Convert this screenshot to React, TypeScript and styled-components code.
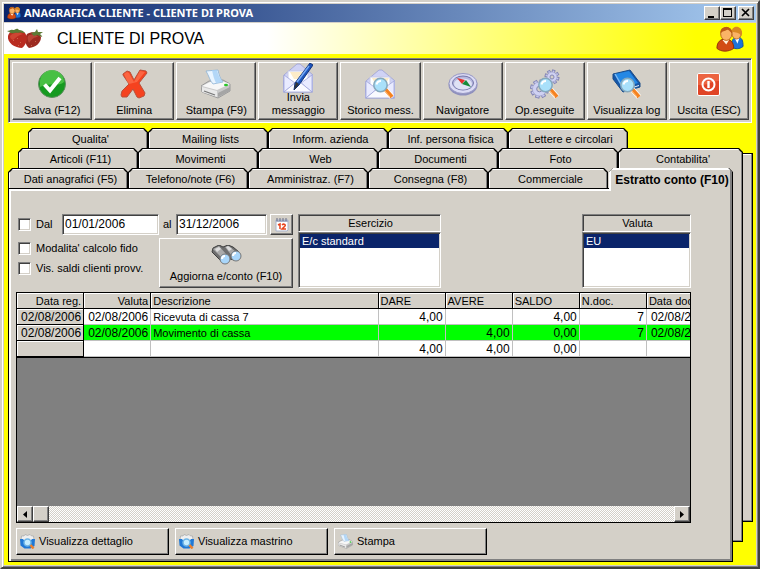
import React from 'react';
import styled, { createGlobalStyle, css } from 'styled-components';

const face = '#d4d0c8';
const shadow = '#808080';
const dark = '#404040';
const navy = '#0a246a';

const Global = createGlobalStyle`
  *, *::before, *::after { box-sizing: border-box; }
  body { margin: 0; background: ${face}; }
  body, button, input, select {
    font-family: "Liberation Sans", Arial, sans-serif;
    font-size: 11px;
    line-height: 13px;
    color: #000;
  }
  button, input, select { margin: 0; border-radius: 0; }
`;

const raised = css`
  border: 1px solid;
  border-color: #fff ${dark} ${dark} #fff;
  box-shadow: inset -1px -1px ${shadow};
`;

const sunken = css`
  border: 1px solid;
  border-color: ${shadow} #fff #fff ${shadow};
  box-shadow: inset 1px 1px ${dark}, inset -1px -1px ${face};
`;

const Frame = styled.main`
  min-height: 100vh;
  display: flex;
  flex-direction: column;
  padding: 2px;
  background: ${face};
  border: 2px solid;
  border-color: ${face} ${dark} ${dark} ${face};
  box-shadow: inset 1px 1px #fff, inset -1px -1px ${shadow};
`;

const TitleBar = styled.header`
  display: flex;
  align-items: center;
  height: 18px;
  margin-bottom: 1px;
  padding: 0 2px 0 3px;
  gap: 3px;
  background: linear-gradient(90deg, ${navy}, #a6caf0);
`;

const Title = styled.h1`
  flex: 1;
  margin: 0;
  font: bold 11px/16px "Noto Sans", "Open Sans", sans-serif;
  color: #fff;
  white-space: nowrap;
`;

const WindowButtons = styled.div`
  display: flex;
`;

const WindowButton = styled.button<{ $apart?: boolean }>`
  ${raised}
  display: flex;
  width: 16px;
  height: 14px;
  padding: 1px 2px;
  margin-left: ${p => (p.$apart ? 2 : 0)}px;
  background: ${face};
`;

const Banner = styled.div`
  display: flex;
  align-items: center;
  height: 31px;
  padding: 0 12px 0 3px;
  background: linear-gradient(90deg, #fff 35%, #ff0 92%);
`;

const BannerName = styled.h2`
  flex: 1;
  margin: 0 0 0 12px;
  font-size: 16px;
  line-height: 20px;
  font-weight: normal;
`;

const Body = styled.div`
  flex: 1;
  display: flex;
  flex-direction: column;
  gap: 5px;
  padding: 4px 3px 3px 4px;
  background: #ff0;
`;

const Toolbar = styled.nav`
  ${sunken}
  display: grid;
  grid-template-columns: repeat(9, minmax(0, 1fr));
  gap: 2px;
  height: 65px;
  margin-right: 1px;
  padding: 3px 2px 2px 3px;
  background: ${face};
`;

const ToolButton = styled.button<{ $tight?: boolean }>`
  ${raised}
  display: flex;
  flex-direction: column;
  align-items: center;
  justify-content: flex-end;
  gap: ${p => (p.$tight ? 0 : 5)}px;
  padding: 0 ${p => (p.$tight ? 10 : 1)}px 2px;
  background: ${face};

  svg { flex: none; margin-bottom: ${p => (p.$tight ? -2 : 0)}px; }
`;

const Notebook = styled.div`
  flex: 1;
  display: grid;
  grid-template: minmax(0, 1fr) / minmax(0, 1fr);
  > * { grid-area: 1 / 1; }
`;

const sheet = css`
  background: ${face};
  border: 1px solid #000;
`;

const BackSheet = styled.div<{ $level: 1 | 2 }>`
  ${sheet}
  margin: ${p => (p.$level === 2 ? '25px 0 40px 20px' : '30px 10px 20px 20px')};
  box-shadow: inset -1px -1px ${shadow}, inset 0 1px #fff;
`;

const Front = styled.div`
  display: flex;
  flex-direction: column;
`;

const TabRow = styled.div<{ $level: 0 | 1 | 2 }>`
  display: grid;
  grid-template-columns: repeat(5, minmax(0, 120fr)) minmax(0, 125fr);
  height: 20px;
  margin-left: ${p => p.$level * 10}px;
  margin-right: ${p => 20 - p.$level * 10}px;
`;

const chamfer = css`
  clip-path: polygon(0 4px, 4px 0, calc(100% - 4px) 0, 100% 4px, 100% 100%, 0 100%);
`;

const TabButton = styled.button<{ $active?: boolean; $front?: boolean }>`
  ${chamfer}
  z-index: ${p => (p.$active ? 1 : 'auto')};
  height: ${p => (p.$active ? 23 : p.$front ? 20 : 24)}px;
  margin-left: ${p => (p.$active ? 1 : 0)}px;
  padding: ${p => (p.$active ? '0 1px 0 0' : '1px 1px 0 1px')};
  border: 0;
  background: #000;
  font-size: ${p => (p.$active ? 12 : 11)}px;
  font-weight: ${p => (p.$active ? 'bold' : 'normal')};
  white-space: nowrap;
`;

const TabFace = styled.span<{ $active?: boolean }>`
  ${chamfer}
  display: block;
  height: 100%;
  padding: ${p => (p.$active ? 4 : 3)}px 0 0 ${p => (p.$active ? 3 : 5)}px;
  background: ${face};
  border: solid;
  border-width: ${p => (p.$active ? '2px 2px 0 2px' : '1px 1px 0 1px')};
  border-color: #fff ${shadow} #fff #fff;
`;

const Panel = styled.section`
  ${sheet}
  flex: 1;
  display: flex;
  flex-direction: column;
  margin-right: 20px;
  padding: 25px 41px 6px 7px;
  box-shadow: inset 2px 2px #fff, inset -2px -2px ${shadow};
`;

const Filters = styled.div`
  display: flex;
  gap: 5px;
  height: 74px;
  margin-bottom: 4px;
`;

const FilterForm = styled.form`
  display: flex;
  flex-direction: column;
  gap: 3px;
  width: 277px;
`;

const DateRow = styled.div`
  display: flex;
  align-items: center;
  height: 21px;
`;

const Check = styled.label`
  display: flex;
  align-items: center;
  gap: 5px;
  height: 20px;
  padding-left: 2px;
  white-space: nowrap;
`;

const CheckBox = styled.input`
  ${sunken}
  appearance: none;
  width: 13px;
  height: 13px;
  background: #fff;
`;

const FromCheck = styled(Check)`
  width: 46px;
`;

const ToLabel = styled.label`
  width: 17px;
  padding-left: 4px;
`;

const DateInput = styled.input<{ $wide?: boolean }>`
  ${sunken}
  width: ${p => (p.$wide ? 97 : 91)}px;
  height: 21px;
  padding: 0 1px 1px 2px;
  font-size: 12px;
  background: #fff;
`;

const CalendarButton = styled.button`
  ${raised}
  display: flex;
  align-items: center;
  justify-content: center;
  width: 23px;
  height: 21px;
  margin-left: auto;
  padding: 0;
  background: ${face};
`;

const OptionsRow = styled.div`
  display: flex;
  justify-content: space-between;
`;

const RefreshButton = styled.button`
  ${raised}
  display: flex;
  flex-direction: column;
  align-items: center;
  justify-content: space-between;
  width: 134px;
  height: 50px;
  padding: 6px 0 4px;
  background: ${face};
`;

const Picker = styled.div<{ $end?: boolean }>`
  display: flex;
  flex-direction: column;
  width: ${p => (p.$end ? 109 : 143)}px;
  margin-left: ${p => (p.$end ? 'auto' : 0)};
`;

const PickerLabel = styled.label`
  border: 1px solid;
  border-color: ${shadow} #fff #fff ${shadow};
  box-shadow: inset 1px 1px ${dark};
  height: 18px;
  padding: 2px 0 0 2px;
  text-align: center;
`;

const PickerList = styled.select`
  ${sunken}
  appearance: none;
  flex: 1;
  min-height: 0;
  padding: 1px;
  overflow: hidden;
  background: #fff;
  outline: 0;

  option {
    min-height: 14px;
    padding: 1px 2px 0;
    line-height: 13px;
  }
  option:checked {
    background: linear-gradient(${navy}, ${navy});
    -webkit-text-fill-color: #fff;
  }
`;

const Ledger = styled.div`
  flex: 1;
  display: flex;
  flex-direction: column;
  min-height: 0;
  border: 1px solid #000;
  background: ${shadow};
  overflow: hidden;
`;

const LedgerView = styled.div`
  flex: 1;
  overflow: hidden;
`;

const Table = styled.table`
  table-layout: fixed;
  width: 697px;
  border-collapse: separate;
  border-spacing: 0;
  border-bottom: 1px solid #000;
`;

const Column = styled.col<{ $wide?: boolean }>`
  width: ${p => (p.$wide ? 227 : 67)}px;
`;

const HeadCell = styled.th<{ $right?: boolean }>`
  height: 16px;
  padding: 2px 2px 0;
  border-right: 1px solid #000;
  border-bottom: 1px solid #000;
  box-shadow: inset 1px 1px #fff;
  background: ${face};
  font-weight: normal;
  line-height: 13px;
  text-align: ${p => (p.$right ? 'right' : 'left')};
  white-space: nowrap;
  overflow: hidden;
`;

const Row = styled.tr<{ $green?: boolean }>`
  background: ${p => (p.$green ? '#0f0' : '#fff')};
`;

const Cell = styled.td<{ $figure?: boolean; $fixed?: boolean }>`
  height: 16px;
  padding: 2px 2px 0 2px;
  border-right: 1px solid ${p => (p.$fixed ? '#000' : '#c0c0c0')};
  border-bottom: 1px solid ${p => (p.$fixed ? '#000' : '#c0c0c0')};
  background: ${p => (p.$fixed ? face : 'transparent')};
  box-shadow: ${p => (p.$fixed ? 'inset 1px 1px #fff' : 'none')};
  font-size: ${p => (p.$figure ? 12 : 11)}px;
  line-height: 13px;
  text-align: ${p => (p.$figure ? 'right' : 'left')};
  white-space: nowrap;
  overflow: hidden;
`;

const ScrollBar = styled.div`
  display: flex;
  height: 16px;
  background: repeating-conic-gradient(#fff 0 25%, ${face} 0 50%) 0 0 / 2px 2px;
`;

const ScrollButton = styled.button<{ $end?: boolean }>`
  ${raised}
  display: flex;
  align-items: center;
  justify-content: center;
  width: 16px;
  padding: 0;
  margin-left: ${p => (p.$end ? 'auto' : 0)};
  background: ${face};
`;

const Actions = styled.div`
  display: flex;
  gap: 6px;
  margin-top: 5px;
`;

const ActionButton = styled.button`
  display: flex;
  align-items: center;
  gap: 4px;
  width: 153px;
  height: 27px;
  padding: 0 3px;
  border: 1px solid;
  border-color: #fff #000 #000 #fff;
  box-shadow: inset -1px -1px ${shadow};
  background: ${face};
`;

const Lens = () => (
  <g>
    <path d="M20 20l7 8" stroke="#fff" strokeWidth="5.500" />
    <path d="M20 20l7 8" stroke="#f58220" strokeWidth="4" />
    <path d="M19 21l6 7" stroke="#ffc78a" strokeWidth="1" />
    <circle cx="15.500" cy="16" r="6.700" fill="#a9e0fa" stroke="#86a9bd" strokeWidth="1.500" />
    <path d="M11.500 15.500a4.500 4.500 0 014.500-3.500" stroke="#fff" strokeWidth="2" fill="none" />
  </g>
);

const Svg = ({ size = 30, children }: { size?: number; children: React.ReactNode }) => (
  <svg width={size} height={size} viewBox="0 0 30 30" fill="none" aria-hidden="true">{children}</svg>
);

const SaveIcon = () => (
  <Svg>
    <circle cx="15" cy="15" r="13.500" fill="#169a20" stroke="#5c8f5e" />
    <path d="M3 13a12 12 0 0124 0c-5 5-14 0-24 5z" fill="#55c94e" opacity=".8" />
    <path d="M7.500 15.500l5.500 6 10-12.500" stroke="#fff" strokeWidth="4" />
  </Svg>
);

const DeleteIcon = () => (
  <Svg>
    <path d="M4 5l4-3 3 1 4 8 6-10 6 1 1 2-8 10 6 10-1 3-5 2-2-1-4-8-6 8-5 0-1-2 1-4 7-7-6-9z" fill="#f5421f" stroke="#b8503a" />
    <path d="M5 5l3-2 2 1 5 9 6-11 5 1-8 10-8 2-2-3z" fill="#ff7d5a" opacity=".6" />
  </Svg>
);

const PrintArt = () => (
  <g>
    <path d="M0 17l8-5 14-1 7 4v7l-12 7L1 23z" fill="#c9c9c9" stroke="#9a9a9a" />
    <path d="M1 17l8-4 12-1 8 3-13 6z" fill="#f7f7f7" />
    <path d="M5 2l12-1c1 5 2 8 5 12l-10 2c-3-3-4-8-7-13z" fill="#eaf5ff" stroke="#8db2d5" strokeWidth=".8" />
    <path d="M16 1c1 5 3 9 6 12l-7 1c-2-4-3-8-4-13z" fill="#a5cff5" opacity=".8" />
    <path d="M1 18l15 4v6L1 23z" fill="#e9e9e9" />
    <path d="M3 22l11 4" stroke="#777" strokeWidth="1.300" />
    <path d="M17 24l12-6v4l-12 6z" fill="#a5a5a5" />
    <ellipse cx="25" cy="16" rx="2" ry="1.300" fill="#28c528" />
  </g>
);

const Envelope = () => (
  <g>
    <path d="M1 12L14 1h3l13 11v17H0z" fill="#cfd2f5" stroke="#9aa0d4" strokeWidth=".8" />
    <path d="M5 8h20v13H5z" fill="#fff" stroke="#c9cbe6" />
    <path d="M7 9h17l-4 7h-9z" fill="#fdecc8" />
    <path d="M1 12l11 8L1 29zM29 12l-11 8 11 9z" fill="#e9ebff" stroke="#9fa5da" strokeWidth=".8" />
    <path d="M1 29l12-10h4l12 10z" fill="#fafaff" stroke="#9fa5da" strokeWidth=".8" />
  </g>
);

const MessageIcon = () => (
  <Svg>
    <Envelope />
    <path d="M27 0l3 2-14 20-5 5 1-7z" fill="#1d55bd" stroke="#13337a" />
    <path d="M26 3L14 19" stroke="#77a9f5" strokeWidth="1.500" />
    <path d="M13 19l3 2-5 6z" fill="#333" />
  </Svg>
);

const HistoryIcon = () => (
  <Svg><Envelope /><Lens /></Svg>
);

const CompassIcon = () => (
  <Svg>
    <ellipse cx="15" cy="16" rx="14.500" ry="10.500" fill="#8f90bd" />
    <ellipse cx="15" cy="14.500" rx="14" ry="10" fill="#dcdcf5" stroke="#9697c4" />
    <ellipse cx="15" cy="14" rx="10.500" ry="7" fill="#b5b7de" stroke="#7476a9" />
    <ellipse cx="15" cy="15" rx="9" ry="5.500" fill="#dfe2f5" />
    <path d="M9 9l8 2-3 4z" fill="#e5322d" />
    <path d="M14 15l4-4 5 7z" fill="#168a3a" />
  </Svg>
);

const Gear = ({ x, y, r }: { x: number; y: number; r: number }) => {
  const teeth = [0, 45, 90, 135].map(a => (
    <rect
      key={a}
      x={x - r / 4}
      y={y - r - 2}
      width={r / 2}
      height={2 * r + 4}
      transform={`rotate(${a + 15} ${x} ${y})`}
    />
  ));
  return (
    <g>
      <g fill="#c9cbee" stroke="#8587b5" strokeWidth="1">{teeth}</g>
      <circle cx={x} cy={y} r={r} fill="#cfd1f2" stroke="#9a9cca" strokeWidth=".6" />
      <circle cx={x} cy={y} r={r / 2.5} fill={face} stroke="#8587b5" />
    </g>
  );
};

const OperationsIcon = () => (
  <Svg><Gear x={22} y={8} r={5} /><Gear x={9.5} y={20} r={7} /><Lens /></Svg>
);

const LogIcon = () => (
  <Svg>
    <path d="M1 5l17-4 10 13v4L11 23 1 10z" fill="#1556a8" stroke="#174b88" />
    <path d="M3 5l14-3 9 12-15 5z" fill="#2488e5" />
    <path d="M11 21l16-5v1l-16 5z" fill="#e9f1fa" />
    <path d="M3 5l8 14" stroke="#7bbcf7" strokeWidth="1.500" />
    <Lens />
  </Svg>
);

const ExitIcon = () => (
  <Svg>
    <rect x="3.500" y="4.500" width="22" height="22" rx="1.500" fill="#e04425" stroke="#fff" />
    <path d="M4 5h21v7c-8 0-11 5-21 4z" fill="#f37a55" opacity=".6" />
    <circle cx="14.500" cy="15.500" r="6" stroke="#fff" strokeWidth="2" />
    <path d="M14.500 12v7" stroke="#fff" strokeWidth="2.400" />
  </Svg>
);

const PeopleIcon = ({ size = 28 }: { size?: number }) => (
  <Svg size={size}>
    <path d="M17 24c-1-8 2-11 6-11 5 0 6 4 6 10-4 3-8 3-12 1z" fill="#1d74d8" stroke="#0f4f9f" />
    <path d="M20 14l3 6 2-6z" fill="#fff" />
    <ellipse cx="22" cy="9" rx="5" ry="6" fill="#f9b266" stroke="#b8691e" />
    <path d="M17 7c0-7 11-7 11 2l-1 3c-2-5-6-3-10-5z" fill="#d98822" />
    <path d="M1 25c0-7 4-10 9-10s9 3 9 10c-5 4-14 4-18 0z" fill="#d24c14" stroke="#8d2d0a" />
    <path d="M7 16l4 5 3-5z" fill="#fff3df" />
    <ellipse cx="11" cy="9.500" rx="6" ry="7" fill="#fbb466" stroke="#b8651b" />
    <path d="M5 9C3 0 19 0 17 9c-2-2-3-4-5-4-3 2-5 1-7 4z" fill="#bb5a15" />
  </Svg>
);

const StrawberryIcon = () => (
  <svg width="38" height="22" viewBox="0 0 38 22" aria-hidden="true">
    <path d="M20 6c5-3 12-2 14 3 0 6-5 10-12 11-4-3-5-9-2-14z" fill="#9c2a20" />
    <path d="M1 8c1-6 12-7 17-3 4 5 1 12-3 15C8 20 0 15 1 8z" fill="#b92c20" />
    <path d="M3 8c3-4 9-4 13-2-4 1-7 3-10 6-2-1-3-2-3-4z" fill="#d9503a" opacity=".7" />
    <path d="M21 8c3-2 8-2 10 1-4 0-6 2-9 6-1-2-2-5-1-7z" fill="#c8503e" opacity=".7" />
    <path d="M0 3c3 0 3-2 6-1 2 0 4-3 6 0 3 0 4 1 6 3-3 0-5-1-7 0-3-1-5 1-7 0zM24 5l4-1 2-3 1 3 5 0-3 2 3 3-6-2-3 1z" fill="#5d7a35" />
    <path d="M6 12l1 1m3-3l1 1m2 3l1 1m-3 2l1 1m16-5l1 1m-5 3l1 1" stroke="#d98060" strokeWidth=".7" />
  </svg>
);

const BinocularIcon = () => (
  <svg width="31" height="20" viewBox="0 0 31 20" aria-hidden="true">
    <path d="M2 3l6-3 4 2 5-2 5 2 6 5-5 8-8-2-5 3L1 7z" fill="#6e6e6e" stroke="#3f3f3f" />
    <path d="M2 4l6-3 7 8-4 4zM14 2l4-1 7 6-4 4z" fill="#aaa" />
    <path d="M4 4l4-2 2 2-4 3zM15 2l2-1 4 3-3 2z" fill="#ddd" />
    <ellipse cx="14" cy="14" rx="5" ry="5" fill="#a9d6fa" stroke="#777" />
    <ellipse cx="25" cy="11" rx="5" ry="5" fill="#a9d6fa" stroke="#777" />
    <path d="M11 14c0-2 1-3 3-3M22 11c0-2 1-3 3-3" stroke="#fff" strokeWidth="2" fill="none" />
  </svg>
);

const CalendarIcon = () => (
  <svg width="14" height="14" viewBox="0 0 14 14" aria-hidden="true">
    <path d="M1 2h12v10l-1 1H1z" fill="#fff" stroke="#a9b4cc" />
    <path d="M1 2h12v2H1z" fill="#aab2c8" />
    <path d="M2 0v3m3-3v3m3-3v3m3-3v3" stroke="#6a6f86" />
    <path d="M3 7l2-1v5m2-4c2-2 4 0 3 1l-3 3h4" stroke="#e8431c" strokeWidth="1.500" fill="none" />
  </svg>
);

const ViewIcon = () => (
  <Svg size={15}>
    <path d="M3 4h5l2-3 5 2 5-2 3 3h4l1 10H2z" fill="#efefef" stroke="#8d9296" />
    <path d="M0 10h6l3 4h12l3-4h6l-1 14-8 5H9l-8-6z" fill="#1e78d6" />
    <circle cx="15" cy="17" r="7" fill="#c4edff" stroke="#6cb4e6" strokeWidth="3" />
    <path d="M21 22l6 7" stroke="#ef812c" strokeWidth="5" />
  </Svg>
);

const Arrow = ({ right }: { right?: boolean }) => (
  <svg width="4" height="7" viewBox="0 0 4 7" aria-hidden="true">
    <path d={right ? 'M0 0l4 3.500L0 7z' : 'M4 0L0 3.500 4 7z'} />
  </svg>
);

const tools = [
  { label: 'Salva (F12)', icon: <SaveIcon /> },
  { label: 'Elimina', icon: <DeleteIcon /> },
  { label: 'Stampa (F9)', icon: <Svg><PrintArt /></Svg> },
  { label: 'Invia messaggio', icon: <MessageIcon />, tight: true },
  { label: 'Storico mess.', icon: <HistoryIcon /> },
  { label: 'Navigatore', icon: <CompassIcon /> },
  { label: 'Op.eseguite', icon: <OperationsIcon /> },
  { label: 'Visualizza log', icon: <LogIcon /> },
  { label: 'Uscita (ESC)', icon: <ExitIcon /> },
];

const tabRows: { level: 0 | 1 | 2; tabs: string[] }[] = [
  { level: 2, tabs: ["Qualita'", 'Mailing lists', 'Inform. azienda', 'Inf. persona fisica', 'Lettere e circolari'] },
  { level: 1, tabs: ['Articoli (F11)', 'Movimenti', 'Web', 'Documenti', 'Foto', "Contabilita'"] },
  { level: 0, tabs: ['Dati anagrafici (F5)', 'Telefono/note (F6)', 'Amministraz. (F7)', 'Consegna (F8)', 'Commerciale', 'Estratto conto (F10)'] },
];

const activeTab = 'Estratto conto (F10)';

const columns = ['Data reg.', 'Valuta', 'Descrizione', 'DARE', 'AVERE', 'SALDO', 'N.doc.', 'Data doc.'];

const entries = [
  ['02/08/2006', '02/08/2006', 'Ricevuta di cassa 7', '4,00', '', '4,00', '7', '02/08/2006'],
  ['02/08/2006', '02/08/2006', 'Movimento di cassa', '', '4,00', '0,00', '7', '02/08/2006'],
  ['', '', '', '4,00', '4,00', '0,00', '', ''],
];

export default function App() {
  return (
    <>
      <Global />
      <Frame>
        <TitleBar>
          <PeopleIcon size={14} />
          <Title>ANAGRAFICA CLIENTE - CLIENTE DI PROVA</Title>
          <WindowButtons>
            <WindowButton aria-label="Riduci a icona">
              <svg width="10" height="10"><path d="M1 8h6v2H1z" /></svg>
            </WindowButton>
            <WindowButton aria-label="Ingrandisci">
              <svg width="10" height="10" shapeRendering="crispEdges"><path d="M0 0h9v9H0zM1 2v6h7V2z" fillRule="evenodd" /></svg>
            </WindowButton>
            <WindowButton aria-label="Chiudi" $apart>
              <svg width="10" height="10"><path d="M1 1l7 7M8 1L1 8" stroke="#000" strokeWidth="1.700" /></svg>
            </WindowButton>
          </WindowButtons>
        </TitleBar>
        <Banner>
          <StrawberryIcon />
          <BannerName>CLIENTE DI PROVA</BannerName>
          <PeopleIcon />
        </Banner>
        <Body>
          <Toolbar aria-label="Comandi">
            {tools.map(t => (
              <ToolButton key={t.label} $tight={t.tight}>
                {t.icon}
                <span>{t.label}</span>
              </ToolButton>
            ))}
          </Toolbar>
          <Notebook>
            <BackSheet $level={2} />
            <BackSheet $level={1} />
            <Front>
              {tabRows.map(row => (
                <TabRow key={row.level} $level={row.level} role="tablist">
                  {row.tabs.map(name => (
                    <TabButton
                      key={name}
                      role="tab"
                      aria-selected={name === activeTab}
                      $active={name === activeTab}
                      $front={row.level === 0}
                    >
                      <TabFace $active={name === activeTab}>{name}</TabFace>
                    </TabButton>
                  ))}
                </TabRow>
              ))}
              <Panel role="tabpanel" aria-label={activeTab}>
                <Filters>
                  <FilterForm onSubmit={e => e.preventDefault()}>
                    <DateRow>
                      <FromCheck><CheckBox type="checkbox" />Dal</FromCheck>
                      <DateInput $wide aria-label="Dal" defaultValue="01/01/2006" />
                      <ToLabel htmlFor="to">al</ToLabel>
                      <DateInput id="to" defaultValue="31/12/2006" />
                      <CalendarButton type="button" aria-label="Calendario"><CalendarIcon /></CalendarButton>
                    </DateRow>
                    <OptionsRow>
                      <div>
                        <Check><CheckBox type="checkbox" />Modalita' calcolo fido</Check>
                        <Check><CheckBox type="checkbox" />Vis. saldi clienti provv.</Check>
                      </div>
                      <RefreshButton type="submit">
                        <BinocularIcon />
                        <span>Aggiorna e/conto (F10)</span>
                      </RefreshButton>
                    </OptionsRow>
                  </FilterForm>
                  <Picker>
                    <PickerLabel htmlFor="year">Esercizio</PickerLabel>
                    <PickerList id="year" size={3} defaultValue="std">
                      <option value="std">E/c standard</option>
                    </PickerList>
                  </Picker>
                  <Picker $end>
                    <PickerLabel htmlFor="currency">Valuta</PickerLabel>
                    <PickerList id="currency" size={3} defaultValue="eu">
                      <option value="eu">EU</option>
                    </PickerList>
                  </Picker>
                </Filters>
                <Ledger>
                  <LedgerView>
                    <Table>
                      <colgroup>
                        {columns.map((c, i) => <Column key={c} $wide={i === 2} />)}
                      </colgroup>
                      <thead>
                        <tr>
                          {columns.map((c, i) => <HeadCell key={c} $right={i < 2}>{c}</HeadCell>)}
                        </tr>
                      </thead>
                      <tbody>
                        {entries.map((cells, r) => (
                          <Row key={r} $green={r === 1}>
                            {cells.map((text, i) => (
                              <Cell key={i} $fixed={i === 0} $figure={i !== 2}>{text}</Cell>
                            ))}
                          </Row>
                        ))}
                      </tbody>
                    </Table>
                  </LedgerView>
                  <ScrollBar>
                    <ScrollButton aria-label="Scorri a sinistra"><Arrow /></ScrollButton>
                    <ScrollButton aria-label="Posizione" />
                    <ScrollButton $end aria-label="Scorri a destra"><Arrow right /></ScrollButton>
                  </ScrollBar>
                </Ledger>
                <Actions>
                  <ActionButton><ViewIcon />Visualizza dettaglio</ActionButton>
                  <ActionButton><ViewIcon />Visualizza mastrino</ActionButton>
                  <ActionButton><Svg size={15}><PrintArt /></Svg>Stampa</ActionButton>
                </Actions>
              </Panel>
            </Front>
          </Notebook>
        </Body>
      </Frame>
    </>
  );
}
